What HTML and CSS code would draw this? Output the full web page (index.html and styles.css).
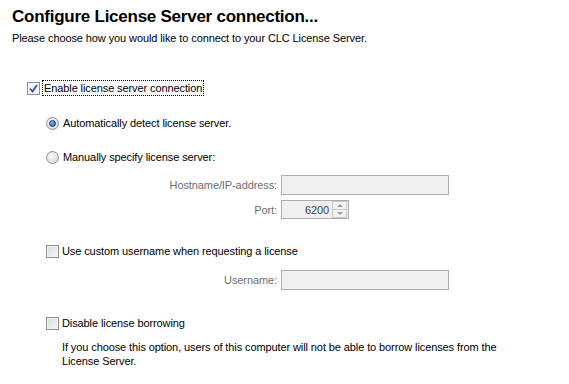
FILE: index.html
```html
<!DOCTYPE html>
<html lang="en">
<head>
    <meta charset="UTF-8">
    <title>Configure License Server connection</title>
    <link rel="stylesheet" href="styles.css">
</head>
<body>
    <div class="cabecera">
        <h1 class="titulo">Configure License Server connection...</h1>
        <p class="subtitulo">Please choose how you would like to connect to your CLC License Server.</p>
    </div>

    <div class="opciones">
        <label class="fila-check principal">
            <span class="caja marcada">
                <svg width="9" height="9" viewBox="0 0 9 9"><path d="M1 4.5 L3.5 7.5 L8 1" fill="none" stroke="#2a5aa8" stroke-width="1.8"/></svg>
            </span>
            <span class="foco">Enable license server connection</span>
        </label>

        <div class="grupo">
            <label class="fila-radio primera">
                <span class="radio activo"></span>
                Automatically detect license server.
            </label>
            <label class="fila-radio">
                <span class="radio"></span>
                Manually specify license server:
            </label>

            <div class="campo host">
                <span class="etiqueta">Hostname/IP-address:</span>
                <span class="entrada ancha"></span>
            </div>
            <div class="campo puerto">
                <span class="etiqueta">Port:</span>
                <span class="spinner">
                    <span class="valor">6200</span>
                    <span class="flechas">
                        <span class="flecha arriba"></span>
                        <span class="flecha abajo"></span>
                    </span>
                </span>
            </div>

            <label class="fila-check usuario">
                <span class="caja"></span>
                Use custom username when requesting a license
            </label>
            <div class="campo nombre">
                <span class="etiqueta">Username:</span>
                <span class="entrada ancha"></span>
            </div>

            <label class="fila-check prestamo">
                <span class="caja"></span>
                Disable license borrowing
            </label>
            <p class="nota">If you choose this option, users of this computer will not be able to borrow licenses from the<br>License Server.</p>
        </div>
    </div>
</body>
</html>
```

FILE: styles.css
```css
body {
    margin: 0;
    padding: 0;
    background-color: #ffffff;
    color: #000000;
    font-family: "Liberation Sans", Arial, sans-serif;
    font-size: 11px;
    letter-spacing: -0.1px;
}

.cabecera {
    padding: 7px 0 0 12px;
}

.titulo {
    margin: 0;
    font-size: 17px;
    line-height: 20px;
    font-weight: bold;
    letter-spacing: -0.25px;
}

.subtitulo {
    margin: 4px 0 0 0;
    line-height: 14px;
}

.opciones {
    padding-left: 27px;
}

.fila-check, .fila-radio {
    display: flex;
    align-items: center;
    gap: 3px;
    height: 14px;
    line-height: 14px;
}

.principal {
    margin-top: 36px;
}

.foco {
    outline: 1px dotted #000000;
    outline-offset: 0;
    padding: 0 1px;
    line-height: 14px;
}

.caja {
    width: 11px;
    height: 11px;
    border: 1px solid #8e8f8f;
    background: linear-gradient(135deg, #dcdcdc, #f6f6f6);
    box-shadow: inset 0 0 0 1px #f4f4f4;
    display: flex;
    justify-content: center;
    align-items: center;
    flex-shrink: 0;
}

.caja.marcada {
    background: #f4f4f4;
}

.grupo {
    padding-left: 19px;
}

.fila-radio {
    gap: 4px;
}

.fila-radio.primera {
    margin-top: 21px;
}

.fila-radio + .fila-radio {
    margin-top: 20px;
}

.radio {
    width: 11px;
    height: 11px;
    border: 1px solid #8f8f8f;
    border-radius: 50%;
    background: radial-gradient(circle at 40% 40%, #f8f8f8, #d4d4d4);
    flex-shrink: 0;
    display: flex;
    justify-content: center;
    align-items: center;
}

.radio.activo::after {
    content: "";
    width: 5px;
    height: 5px;
    border-radius: 50%;
    background: radial-gradient(circle at 35% 35%, #6fc0f0, #0f4f9a);
    border: 1px solid #1d3b66;
}

.campo {
    display: grid;
    grid-template-columns: 231px auto;
    column-gap: 4px;
    align-items: center;
}

.etiqueta {
    text-align: right;
    color: #6d6d6d;
}

.host {
    margin-top: 11px;
}

.puerto {
    margin-top: 5px;
}

.entrada {
    height: 18px;
    border: 1px solid #acacac;
    background-color: #f0f0f0;
}

.ancha {
    width: 166px;
}

.spinner {
    width: 66px;
    height: 17px;
    border: 1px solid #acacac;
    background-color: #f0f0f0;
    display: flex;
    align-items: center;
}

.valor {
    flex: 1;
    text-align: right;
    padding-right: 3px;
    color: #444444;
}

.flechas {
    width: 15px;
    height: 17px;
    display: flex;
    flex-direction: column;
    margin-right: 1px;
}

.flecha {
    flex: 1;
    border: 1px solid #c6c6c6;
    background: #f3f3f3;
    display: flex;
    justify-content: center;
    align-items: center;
}

.flecha::after {
    content: "";
    border-left: 3px solid transparent;
    border-right: 3px solid transparent;
}

.arriba::after {
    border-bottom: 3px solid #9a9a9a;
}

.abajo {
    border-top: none;
}

.abajo::after {
    border-top: 3px solid #9a9a9a;
}

.usuario {
    margin-top: 25px;
}

.nombre {
    margin-top: 12px;
}

.prestamo {
    margin-top: 26px;
}

.nota {
    margin: 10px 0 0 16px;
    line-height: 14px;
}
```
